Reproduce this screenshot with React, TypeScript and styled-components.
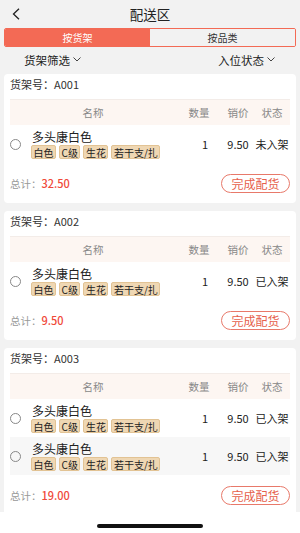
import React from "react";
import styled, { createGlobalStyle } from "styled-components";

type Item = { name: string; tags: string[]; qty: number; price: string; status: string };
type Shelf = { code: string; total: string; items: Item[] };

const tags = ["白色", "C级", "生花", "若干支/扎"];

const shelves: Shelf[] = [
  { code: "A001", total: "32.50", items: [{ name: "多头康白色", tags, qty: 1, price: "9.50", status: "未入架" }] },
  { code: "A002", total: "9.50", items: [{ name: "多头康白色", tags, qty: 1, price: "9.50", status: "已入架" }] },
  {
    code: "A003",
    total: "19.00",
    items: [
      { name: "多头康白色", tags, qty: 1, price: "9.50", status: "已入架" },
      { name: "多头康白色", tags, qty: 1, price: "9.50", status: "已入架" },
    ],
  },
];

const ChevronDown = () => (
  <svg width="8" height="5" viewBox="0 0 8 5" fill="none">
    <polyline points="0.5,0.5 4,4 7.5,0.5" stroke="#444" strokeWidth="1" />
  </svg>
);

const App: React.FC = () => {
  return (
    <Page>
      <GlobalStyle />
      <Header>
        <BackButton>
          <svg width="8" height="12" viewBox="0 0 8 12" fill="none">
            <polyline points="7,0.8 1.5,6 7,11.2" stroke="#222" strokeWidth="1.3" />
          </svg>
        </BackButton>
        <Title>配送区</Title>
      </Header>

      <Tabs>
        <Tab active>按货架</Tab>
        <Tab>按品类</Tab>
      </Tabs>

      <Filters>
        <Filter>
          货架筛选 <ChevronDown />
        </Filter>
        <Filter>
          入位状态 <ChevronDown />
        </Filter>
      </Filters>

      <List>
        {shelves.map((shelf) => (
          <Card key={shelf.code}>
            <ShelfTitle>货架号：{shelf.code}</ShelfTitle>
            <TableHead>
              <HeadCell>名称</HeadCell>
              <HeadCell>数量</HeadCell>
              <HeadCell>销价</HeadCell>
              <HeadCell>状态</HeadCell>
            </TableHead>
            {shelf.items.map((item, i) => (
              <Row key={i} striped={i % 2 === 1}>
                <NameCell>
                  <Radio />
                  <NameBlock>
                    <Name>{item.name}</Name>
                    <TagList>
                      {item.tags.map((t) => (
                        <Tag key={t}>{t}</Tag>
                      ))}
                    </TagList>
                  </NameBlock>
                </NameCell>
                <Cell shift={12}>{item.qty}</Cell>
                <Cell>{item.price}</Cell>
                <Cell>{item.status}</Cell>
              </Row>
            ))}
            <Footer>
              <Total>
                总计：<TotalValue>{shelf.total}</TotalValue>
              </Total>
              <DoneButton>完成配货</DoneButton>
            </Footer>
          </Card>
        ))}
      </List>

      <HomeBar>
        <Indicator />
      </HomeBar>
    </Page>
  );
};

export default App;

const GlobalStyle = createGlobalStyle`
  html, body {
    margin: 0;
    padding: 0;
    background: #f2f2f2;
  }
  * {
    box-sizing: border-box;
  }
  body {
    font-family: "Noto Sans CJK SC", "Noto Sans", sans-serif;
  }
`;

const Page = styled.div`
  width: 300px;
  height: 533px;
  display: flex;
  flex-direction: column;
  overflow: hidden;
  background: #f2f2f2;
`;

const Header = styled.div`
  height: 28px;
  flex-shrink: 0;
  display: flex;
  align-items: center;
  justify-content: center;
  position: relative;
`;

const BackButton = styled.div`
  position: absolute;
  left: 12px;
  top: 8px;
  display: flex;
`;

const Title = styled.div`
  font-size: 13.5px;
  color: #222;
`;

const Tabs = styled.div`
  margin: 0 4px;
  height: 19px;
  flex-shrink: 0;
  display: flex;
  border: 1px solid #f36a55;
  border-radius: 2px;
  overflow: hidden;
`;

const Tab = styled.div<{ active?: boolean }>`
  flex: 1;
  display: flex;
  align-items: center;
  justify-content: center;
  font-size: 10px;
  color: ${(p) => (p.active ? "#fff" : "#333")};
  background: ${(p) => (p.active ? "#f36a55" : "#f2f2f2")};
`;

const Filters = styled.div`
  height: 27px;
  flex-shrink: 0;
  display: flex;
  align-items: center;
  justify-content: space-between;
  padding: 0 25px 2px 24px;
`;

const Filter = styled.div`
  display: flex;
  align-items: center;
  gap: 3px;
  font-size: 11.5px;
  color: #222;
`;

const List = styled.div`
  flex: 1;
  overflow: hidden;
  display: flex;
  flex-direction: column;
  gap: 8px;
  padding: 0 4px;
`;

const Card = styled.div`
  flex-shrink: 0;
  background: #fff;
  border-radius: 4px;
  padding: 0 6px;
`;

const ShelfTitle = styled.div`
  height: 20px;
  display: flex;
  align-items: center;
  margin-bottom: 5px;
  font-size: 11px;
  color: #333;
`;

const grid = `
  display: grid;
  grid-template-columns: 166px 46px 32px 36px;
  align-items: center;
`;

const TableHead = styled.div`
  ${grid}
  height: 26px;
  background: #fdf6f2;
  border-top: 1px solid #f3ece8;
`;

const HeadCell = styled.div`
  text-align: center;
  font-size: 10.5px;
  color: #888;
`;

const Row = styled.div<{ striped?: boolean }>`
  ${grid}
  height: 38px;
  background: ${(p) => (p.striped ? "#f7f7f7" : "#fff")};
`;

const NameCell = styled.div`
  display: flex;
  align-items: center;
`;

const Radio = styled.div`
  width: 11px;
  height: 11px;
  margin: 0 11px 0 0;
  border: 1px solid #888;
  border-radius: 50%;
`;

const NameBlock = styled.div`
  display: flex;
  flex-direction: column;
  gap: 1px;
`;

const Name = styled.div`
  font-size: 12px;
  line-height: 15px;
  color: #222;
`;

const TagList = styled.div`
  display: flex;
  gap: 3px;
  margin-left: -1px;
`;

const Tag = styled.span`
  height: 14px;
  line-height: 13px;
  padding: 0 1.5px;
  font-size: 10px;
  color: #222;
  background: #efd7b3;
  border: 1px solid #e2c394;
  border-radius: 2px;
`;

const Cell = styled.div<{ shift?: number }>`
  text-align: center;
  font-size: 11px;
  color: #222;
  white-space: nowrap;
  padding-left: ${(p) => p.shift ?? 0}px;
`;

const Footer = styled.div`
  height: 40px;
  display: flex;
  align-items: center;
  justify-content: space-between;
`;

const Total = styled.div`
  font-size: 10.5px;
  color: #999;
`;

const TotalValue = styled.span`
  font-size: 11px;
  font-weight: 500;
  color: #f0493a;
`;

const DoneButton = styled.div`
  width: 69px;
  height: 19px;
  display: flex;
  align-items: center;
  justify-content: center;
  border: 1px solid #e8796a;
  border-radius: 10px;
  font-size: 12px;
  color: #e65f4c;
`;

const HomeBar = styled.div`
  height: 21px;
  flex-shrink: 0;
  background: #fff;
  display: flex;
  justify-content: center;
  padding-top: 12px;
`;

const Indicator = styled.div`
  width: 106px;
  height: 4px;
  border-radius: 2px;
  background: #111;
`;
